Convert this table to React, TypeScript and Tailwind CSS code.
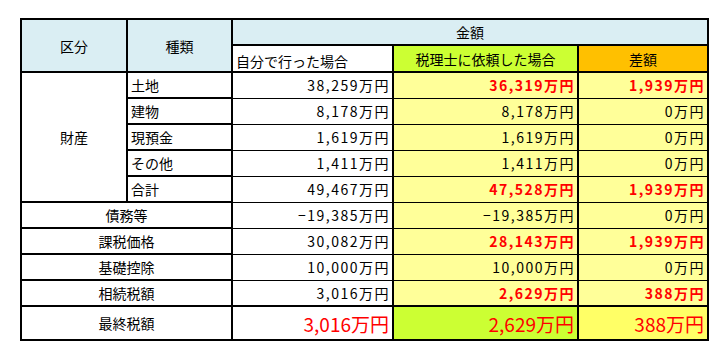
import React from "react";

type Row = {
  label: string;
  self: string;
  pro: string;
  diff: string;
  hot?: boolean;
};

const assets: Row[] = [
  { label: "土地", self: "38,259万円", pro: "36,319万円", diff: "1,939万円", hot: true },
  { label: "建物", self: "8,178万円", pro: "8,178万円", diff: "0万円" },
  { label: "現預金", self: "1,619万円", pro: "1,619万円", diff: "0万円" },
  { label: "その他", self: "1,411万円", pro: "1,411万円", diff: "0万円" },
  { label: "合計", self: "49,467万円", pro: "47,528万円", diff: "1,939万円", hot: true },
];

const others: Row[] = [
  { label: "債務等", self: "−19,385万円", pro: "−19,385万円", diff: "0万円" },
  { label: "課税価格", self: "30,082万円", pro: "28,143万円", diff: "1,939万円", hot: true },
  { label: "基礎控除", self: "10,000万円", pro: "10,000万円", diff: "0万円" },
  { label: "相続税額", self: "3,016万円", pro: "2,629万円", diff: "388万円", hot: true },
];

const thick = "border-2 border-black";
const num = "border-x-2 border-y border-black text-right pr-[2px] tracking-[1.5px]";
const red = "text-[#ff0000] font-bold";

function Amounts({ r }: { r: Row }) {
  return (
    <>
      <td className={`${num} bg-white`}>{r.self}</td>
      <td className={`${num} bg-[#ffff99] ${r.hot ? red : ""}`}>{r.pro}</td>
      <td className={`${num} bg-[#ffff99] ${r.hot ? red : ""}`}>{r.diff}</td>
    </>
  );
}

export default function App() {
  return (
    <div className="w-[711px] h-[341px] bg-white pt-[18px] pl-[20px] font-['Noto_Sans_CJK_JP',sans-serif] text-[14px] leading-none text-black">
      <table className="table-fixed border-collapse">
        <colgroup>
          <col className="w-[106px]" />
          <col className="w-[105px]" />
          <col className="w-[161px]" />
          <col className="w-[185px]" />
          <col className="w-[130px]" />
        </colgroup>
        <tbody>
          <tr className="h-[26px]">
            <td rowSpan={2} className={`${thick} bg-[#daeef3] text-center`}>区分</td>
            <td rowSpan={2} className={`${thick} bg-[#daeef3] text-center`}>種類</td>
            <td colSpan={3} className={`${thick} bg-[#daeef3] text-center`}>金額</td>
          </tr>
          <tr className="h-[27px]">
            <td className={`${thick} bg-white pl-[3px] pt-[4px]`}>自分で行った場合</td>
            <td className={`${thick} bg-[#ccff33] text-center`}>税理士に依頼した場合</td>
            <td className={`${thick} bg-[#ffc000] text-center`}>差額</td>
          </tr>
          {assets.map((r, i) => (
            <tr key={r.label} className="h-[26px]">
              {i === 0 && (
                <td rowSpan={5} className={`${thick} text-center`}>財産</td>
              )}
              <td className={`${thick} pl-[3px]`}>{r.label}</td>
              <Amounts r={r} />
            </tr>
          ))}
          {others.map((r) => (
            <tr key={r.label} className="h-[26px]">
              <td colSpan={2} className={`${thick} text-center`}>{r.label}</td>
              <Amounts r={r} />
            </tr>
          ))}
          <tr className="h-[34px]">
            <td colSpan={2} className={`${thick} text-center`}>最終税額</td>
            <td className={`${thick} text-right pr-[3px] text-[19px] text-[#ff0000]`}>3,016万円</td>
            <td className={`${thick} text-right pr-[3px] text-[19px] text-[#ff0000] bg-[#ccff33]`}>2,629万円</td>
            <td className={`${thick} text-right pr-[3px] text-[19px] text-[#ff0000] bg-[#ffff66]`}>388万円</td>
          </tr>
        </tbody>
      </table>
    </div>
  );
}
